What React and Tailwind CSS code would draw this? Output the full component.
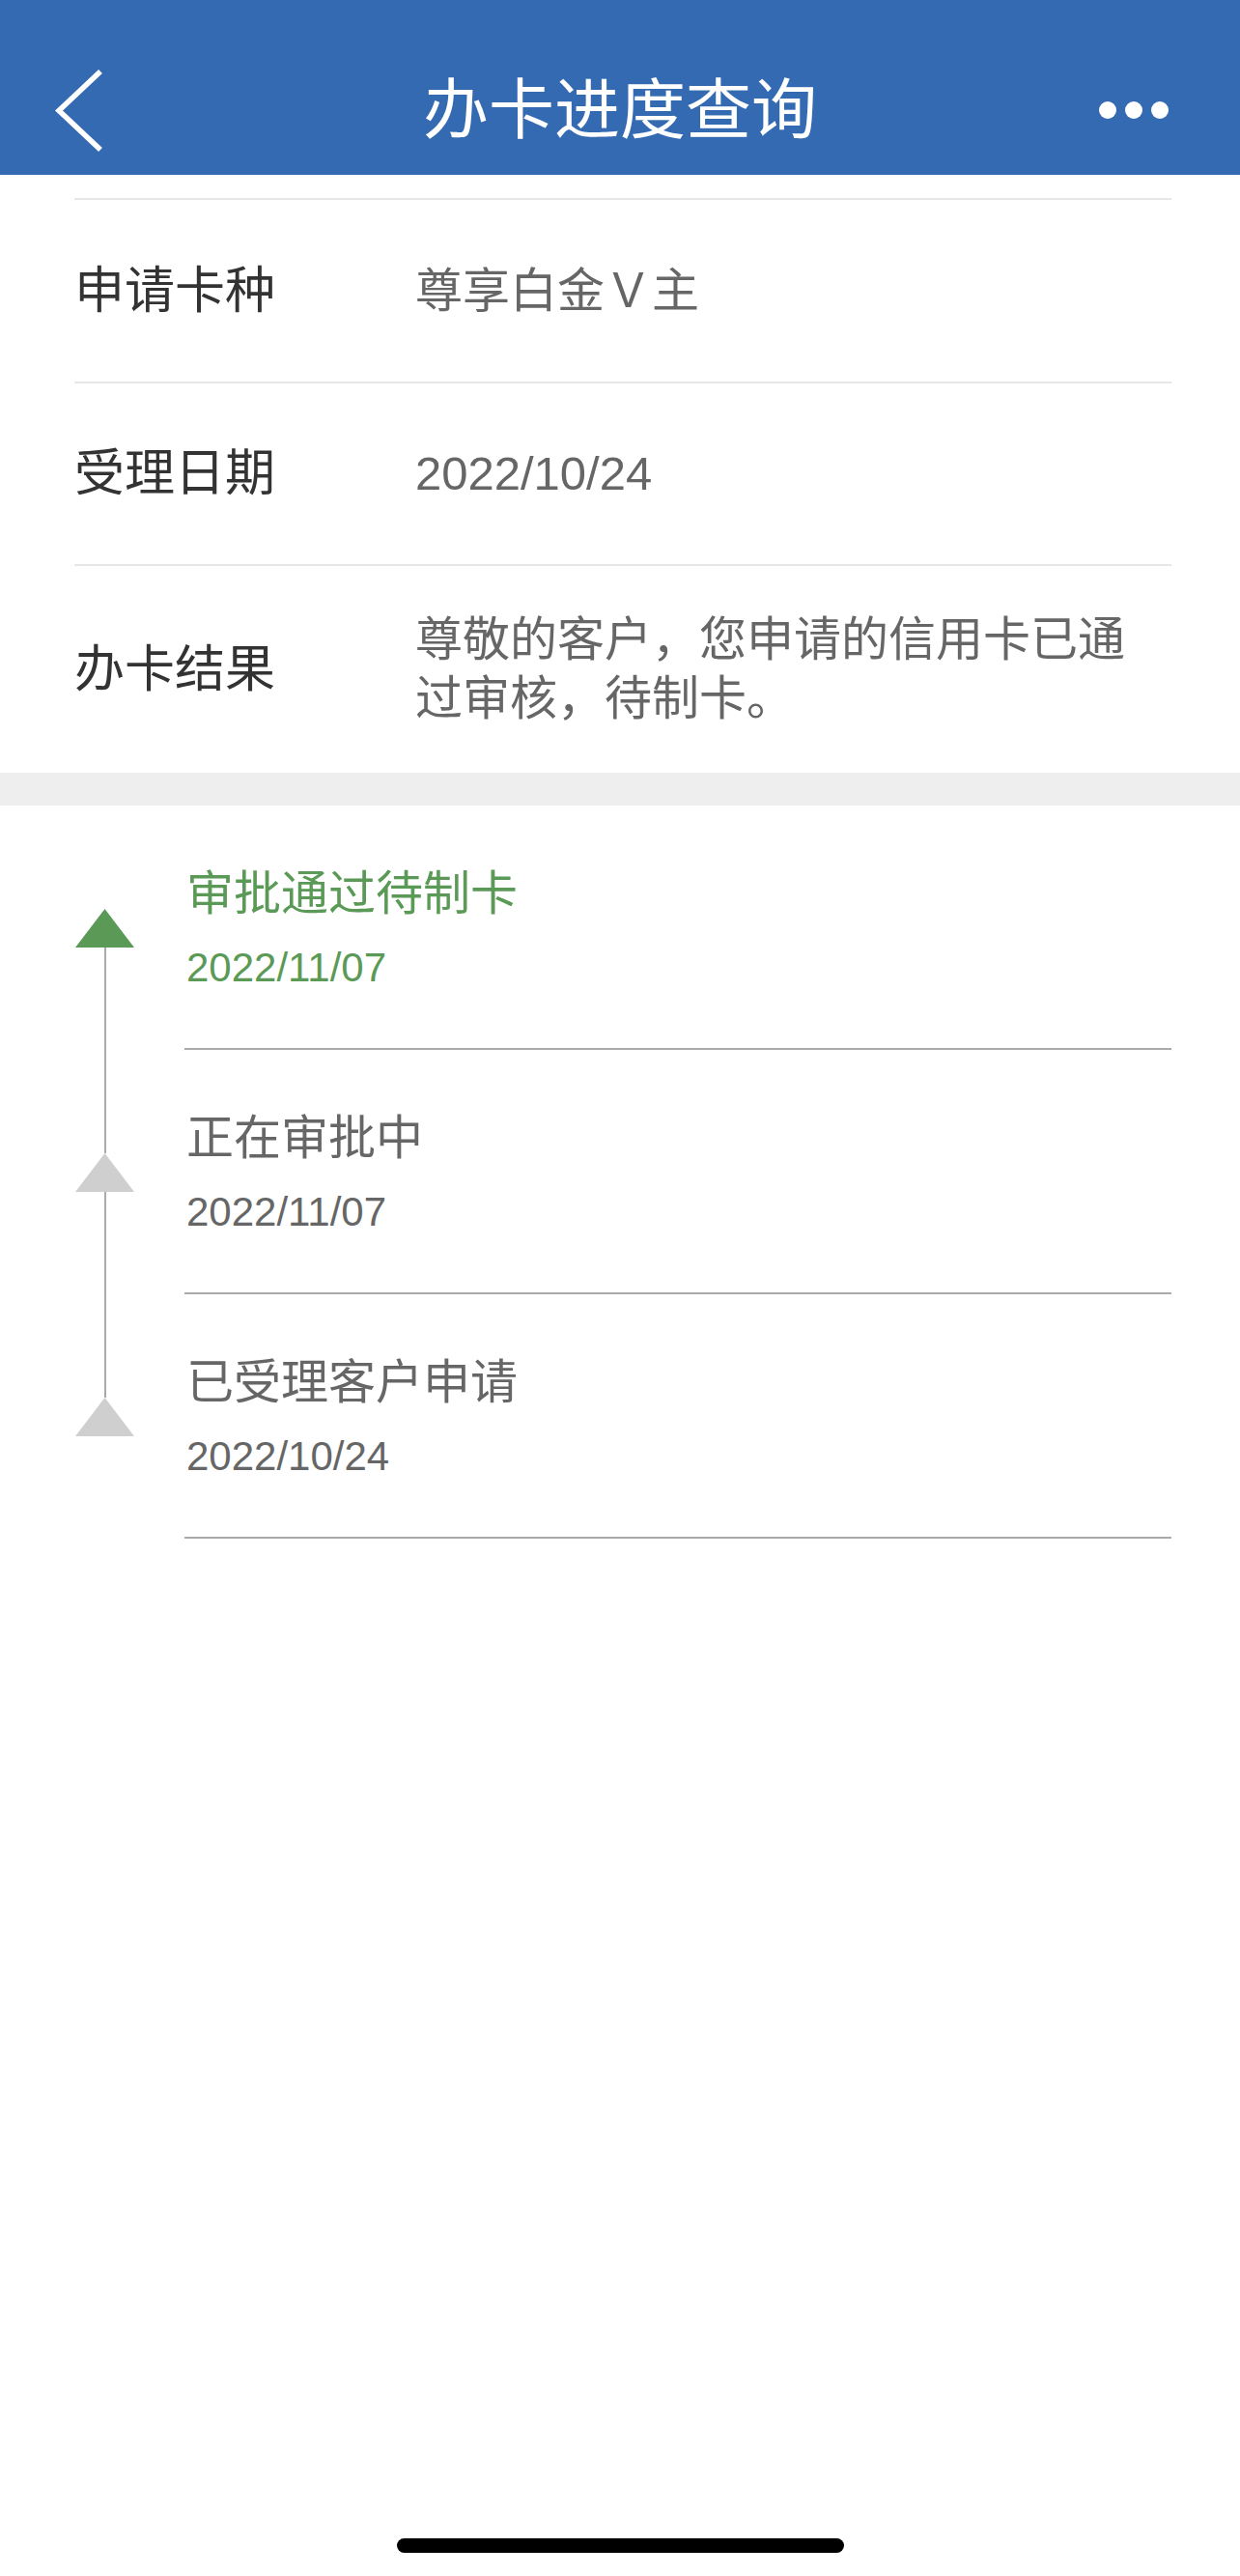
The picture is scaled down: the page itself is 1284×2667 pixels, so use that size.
import React from "react";

const FONT = { fontFamily: '"Liberation Sans", "Noto Sans CJK SC", sans-serif' };

function InfoRow({ label, value, h }) {
  return (
    <div className={`flex items-center border-t-2 border-[#e6e6e6] ${h}`}>
      <div className="w-[353px] shrink-0 text-[52px] leading-[61px] text-[#333333]">{label}</div>
      <div className="flex-1 pr-[20px] text-[49px] leading-[61px] text-[#666666]">{value}</div>
    </div>
  );
}

function Triangle({ color }) {
  return (
    <svg width="61" height="40" viewBox="0 0 61 40" className="block shrink-0">
      <polygon points="30.5,0 61,40 0,40" fill={color} />
    </svg>
  );
}

function TimelineItem({ title, date, active, first, last }) {
  const color = active ? "text-[#5b9a56]" : "text-[#666666]";
  return (
    <div className="flex">
      <div className="w-[191px] shrink-0 flex flex-col">
        <div className="ml-[78px] w-[61px] flex flex-col items-center flex-1">
          <div className={`h-[107px] w-[2px] ${first ? "bg-transparent" : "bg-[#aaaaaa]"}`} />
          <Triangle color={active ? "#5b9a56" : "#cfcfcf"} />
          <div className={`flex-1 w-[2px] ${last ? "bg-transparent" : "bg-[#aaaaaa]"}`} />
        </div>
      </div>
      <div className="flex-1 mr-[71px] border-b-2 border-[#aaaaaa] h-[253px] pt-[58px] pl-[2px]">
        <div className={`text-[49px] leading-[67px] ${color}`}>{title}</div>
        <div className={`mt-[14px] text-[42px] leading-[58px] ${color}`}>{date}</div>
      </div>
    </div>
  );
}

export default function App() {
  return (
    <div className="w-[1284px] min-h-[2667px] bg-white flex flex-col" style={FONT}>
      {/* Header */}
      <div className="h-[181px] bg-[#346ab2] pt-[46px] grid grid-cols-[1fr_auto_1fr] items-center">
        <div className="flex items-center">
          <svg width="60" height="100" viewBox="0 0 60 100" className="ml-[54px] block">
            <polyline points="50,10 7,50.5 50,91" fill="none" stroke="white" strokeWidth="5.5" strokeLinejoin="miter" strokeLinecap="butt" />
          </svg>
        </div>
        <div className="text-[68px] leading-none text-white pb-[9px]" style={{ fontFamily: '"Noto Sans CJK SC", sans-serif' }}>
          办卡进度查询
        </div>
        <div className="flex items-center justify-end gap-[9px] mr-[74px]">
          <div className="w-[18px] h-[18px] rounded-full bg-white" />
          <div className="w-[18px] h-[18px] rounded-full bg-white" />
          <div className="w-[18px] h-[18px] rounded-full bg-white" />
        </div>
      </div>

      {/* Info */}
      <div className="pt-[24px] px-[77px] pr-[71px]">
        <InfoRow label="申请卡种" value="尊享白金Ｖ主" h="h-[190px]" />
        <InfoRow label="受理日期" value="2022/10/24" h="h-[189px]" />
        <InfoRow label="办卡结果" value="尊敬的客户，您申请的信用卡已通过审核，待制卡。" h="h-[216px]" />
      </div>

      <div className="h-[34px] bg-[#eeeeee]" />

      {/* Timeline */}
      <div className="flex flex-col">
        <TimelineItem title="审批通过待制卡" date="2022/11/07" active first />
        <TimelineItem title="正在审批中" date="2022/11/07" />
        <TimelineItem title="已受理客户申请" date="2022/10/24" last />
      </div>

      <div className="mt-auto mb-[24px] flex justify-center">
        <div className="w-[463px] h-[15px] rounded-full bg-black" />
      </div>
    </div>
  );
}
